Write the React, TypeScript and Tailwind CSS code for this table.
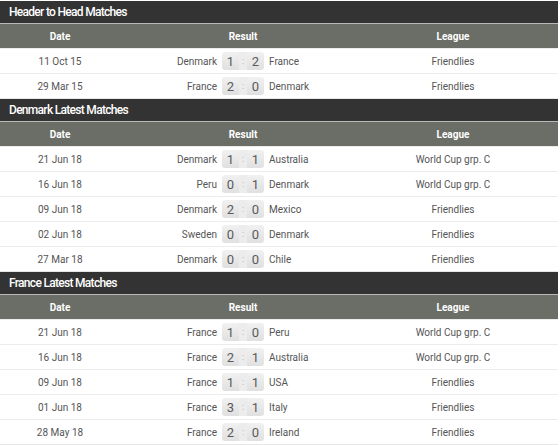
type Match = { date: string; home: string; hs: number; as: number; away: string; league: string }

const WC = 'World Cup grp. C'

const sections: { title: string; rows: Match[] }[] = [
  {
    title: 'Header to Head Matches',
    rows: [
      { date: '11 Oct 15', home: 'Denmark', hs: 1, as: 2, away: 'France', league: 'Friendlies' },
      { date: '29 Mar 15', home: 'France', hs: 2, as: 0, away: 'Denmark', league: 'Friendlies' },
    ],
  },
  {
    title: 'Denmark Latest Matches',
    rows: [
      { date: '21 Jun 18', home: 'Denmark', hs: 1, as: 1, away: 'Australia', league: WC },
      { date: '16 Jun 18', home: 'Peru', hs: 0, as: 1, away: 'Denmark', league: WC },
      { date: '09 Jun 18', home: 'Denmark', hs: 2, as: 0, away: 'Mexico', league: 'Friendlies' },
      { date: '02 Jun 18', home: 'Sweden', hs: 0, as: 0, away: 'Denmark', league: 'Friendlies' },
      { date: '27 Mar 18', home: 'Denmark', hs: 0, as: 0, away: 'Chile', league: 'Friendlies' },
    ],
  },
  {
    title: 'France Latest Matches',
    rows: [
      { date: '21 Jun 18', home: 'France', hs: 1, as: 0, away: 'Peru', league: WC },
      { date: '16 Jun 18', home: 'France', hs: 2, as: 1, away: 'Australia', league: WC },
      { date: '09 Jun 18', home: 'France', hs: 1, as: 1, away: 'USA', league: 'Friendlies' },
      { date: '01 Jun 18', home: 'France', hs: 3, as: 1, away: 'Italy', league: 'Friendlies' },
      { date: '28 May 18', home: 'France', hs: 2, as: 0, away: 'Ireland', league: 'Friendlies' },
    ],
  },
]

function Score({ hs, as }: { hs: number; as: number }) {
  return (
    <div className="flex h-[18px] w-[42px] items-center rounded-[3px] bg-gradient-to-b from-[#f1f1f1] to-[#e0e0e0] text-[13px] leading-none text-[#5a5a5a]">
      <span className="flex-1 text-center">{hs}</span>
      <span className="flex h-full w-[8px] items-center justify-center bg-[#ececec] text-[9px] text-[#aaa]">:</span>
      <span className="flex-1 text-center">{as}</span>
    </div>
  )
}

function Section({ title, rows }: { title: string; rows: Match[] }) {
  return (
    <div>
      <div className="flex h-[22px] items-center bg-[#333333] pl-[9px] text-[12px] font-medium tracking-[-0.7px] text-white">
        {title}
      </div>
      <div className="grid h-[25px] grid-cols-[120px_246px_174px_1fr] items-center border-t border-[#b9b9b9] bg-[#6b6d67] text-[10px] font-bold text-white">
        <div className="text-center">Date</div>
        <div className="text-center">Result</div>
        <div className="text-center">League</div>
        <div />
      </div>
      {rows.map((r, i) => (
        <div
          key={i}
          className="grid h-[25px] grid-cols-[120px_246px_174px_1fr] items-center border-t border-[#ececec] bg-white text-[10px] text-[#555]"
        >
          <div className="text-center">{r.date}</div>
          <div className="grid grid-cols-[1fr_auto_1fr] items-center gap-[5px]">
            <span className="text-right">{r.home}</span>
            <Score hs={r.hs} as={r.as} />
            <span>{r.away}</span>
          </div>
          <div className="text-center">{r.league}</div>
          <div />
        </div>
      ))}
    </div>
  )
}

export default function App() {
  return (
    <div className="h-[445px] w-[560px] overflow-hidden bg-white pt-px font-['Roboto','Liberation_Sans',sans-serif]">
      <div className="flex w-[558px] flex-col gap-px border-b border-[#e6e6e6] bg-[#e6e6e6]">
        {sections.map((s) => (
          <Section key={s.title} title={s.title} rows={s.rows} />
        ))}
      </div>
    </div>
  )
}
